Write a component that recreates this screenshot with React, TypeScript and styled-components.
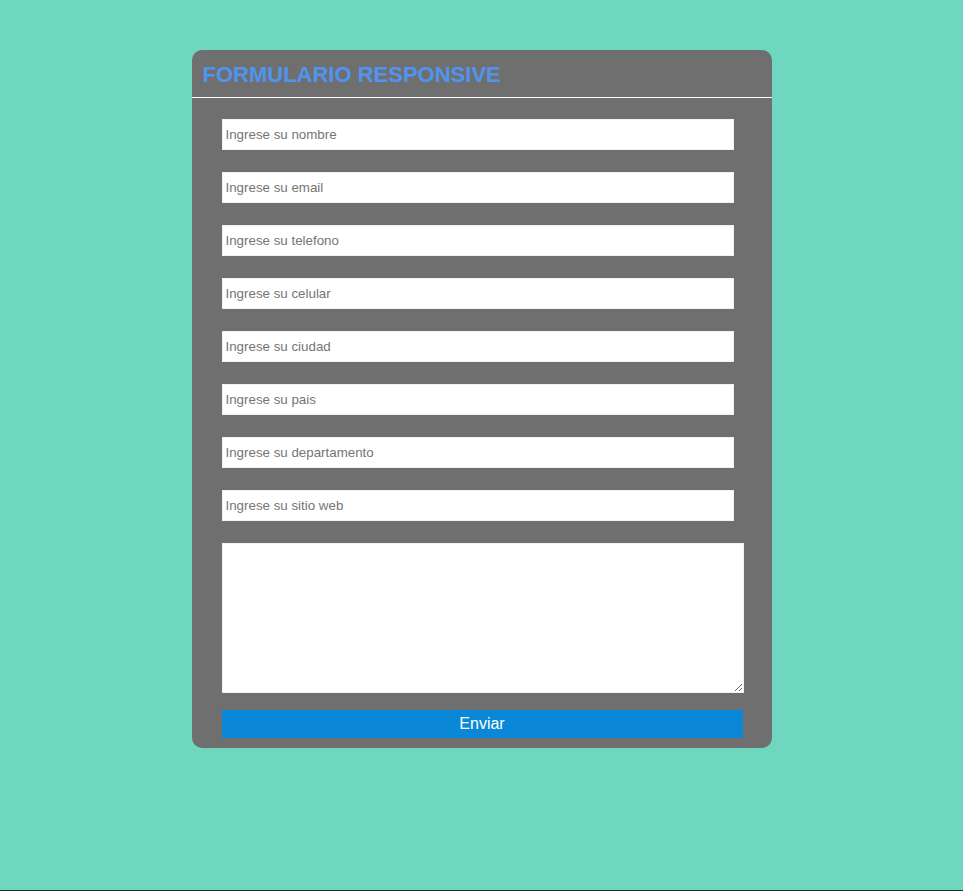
import React from "react";
import styled, { createGlobalStyle } from "styled-components";

const Global = createGlobalStyle`
  html, body {
    margin: 0;
    padding: 0;
    background: #6fd7c0;
  }
  body {
    font-family: "Liberation Sans", Arial, sans-serif;
  }
  * { box-sizing: border-box; }
`;

const Page = styled.div`
  min-height: 891px;
  padding-top: 50px;
  border-bottom: 1px solid #1d2f2b;
`;

const Card = styled.div`
  width: 580px;
  margin: 0 auto;
  background: #6f6f6f;
  border-radius: 10px;
  overflow: hidden;
`;

const Header = styled.div`
  height: 48px;
  border-bottom: 1px solid #ffffff;
  display: flex;
  align-items: center;
  padding: 2px 11px 0;
`;

const Title = styled.h1`
  margin: 0;
  font-family: "Liberation Sans", Arial, sans-serif;
  font-size: 22px;
  font-weight: bold;
  color: #4f95ef;
`;

const Form = styled.form`
  display: flex;
  flex-direction: column;
  align-items: flex-start;
  padding: 21px 28px 10px 30px;
`;

const Input = styled.input`
  width: 512px;
  height: 31px;
  margin-bottom: 22px;
  border: 1px solid #f2f2f2;
  padding: 1px 3px;
  font-family: "Liberation Sans", Arial, sans-serif;
  font-size: 13.333px;
  color: #222;
  background: #ffffff;
  outline: none;
  &::placeholder {
    color: #757575;
  }
`;

const TextArea = styled.textarea`
  width: 522px;
  height: 150px;
  border: 1px solid #f2f2f2;
  background: #ffffff;
  margin: 0;
  resize: both;
  font-family: "Liberation Mono", monospace;
  font-size: 13.333px;
  outline: none;
`;

const Button = styled.button`
  width: 521px;
  height: 28px;
  margin-top: 17px;
  border: none;
  background: #0a87d6;
  color: #ffffff;
  font-family: "Liberation Sans", Arial, sans-serif;
  font-size: 16px;
  padding: 0;
  cursor: pointer;
`;

const fields = [
  "Ingrese su nombre",
  "Ingrese su email",
  "Ingrese su telefono",
  "Ingrese su celular",
  "Ingrese su ciudad",
  "Ingrese su pais",
  "Ingrese su departamento",
  "Ingrese su sitio web",
];

export default function App() {
  return (
    <>
      <Global />
      <Page>
        <Card>
          <Header>
            <Title>FORMULARIO RESPONSIVE</Title>
          </Header>
          <Form onSubmit={(e) => e.preventDefault()}>
            {fields.map((f) => (
              <Input key={f} type="text" placeholder={f} />
            ))}
            <TextArea />
            <Button type="submit">Enviar</Button>
          </Form>
        </Card>
      </Page>
    </>
  );
}
